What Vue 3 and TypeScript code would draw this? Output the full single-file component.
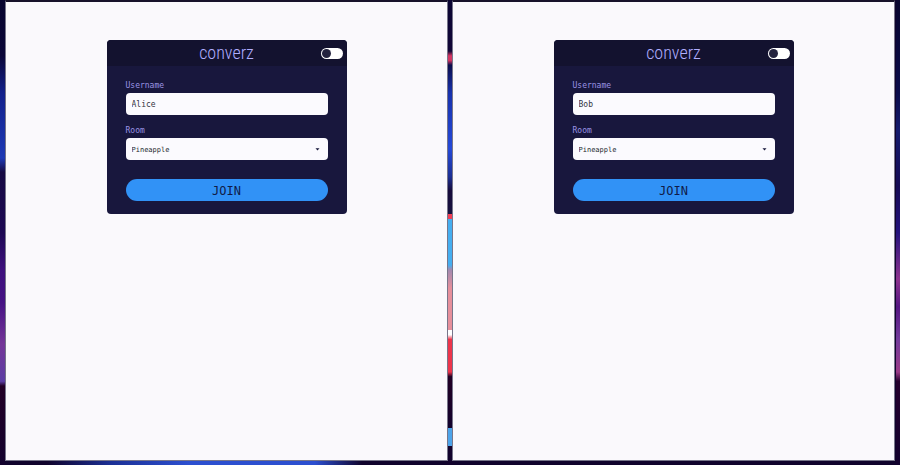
<script setup lang="ts">
import { reactive } from 'vue'

interface Client {
  id: string
  username: string
  room: string
  light: boolean
}

const rooms: string[] = ['Pineapple', 'Mango', 'Papaya']

const clients = reactive<Client[]>([
  { id: 'left', username: 'Alice', room: 'Pineapple', light: false },
  { id: 'right', username: 'Bob', room: 'Pineapple', light: false },
])
</script>

<template>
  <div class="desktop">
    <main v-for="client in clients" :key="client.id" class="window">
      <form class="card" @submit.prevent>
        <header class="card-header">
          <h1 class="brand">converz</h1>
          <input v-model="client.light" type="checkbox" class="toggle" aria-label="Theme" />
        </header>
        <div class="card-body">
          <div class="field">
            <label class="label" :for="`${client.id}-username`">Username</label>
            <input
              :id="`${client.id}-username`"
              v-model="client.username"
              class="control"
              type="text"
              autocomplete="off"
            />
          </div>
          <div class="field">
            <label class="label" :for="`${client.id}-room`">Room</label>
            <div class="select-wrap">
              <select :id="`${client.id}-room`" v-model="client.room" class="control select">
                <option v-for="room in rooms" :key="room" :value="room">{{ room }}</option>
              </select>
              <svg class="caret" viewBox="0 0 5 3" aria-hidden="true">
                <path d="M0.5 0.3h4L2.5 2.6z" fill="#17173a" />
              </svg>
            </div>
          </div>
          <button type="submit" class="join">JOIN</button>
        </div>
      </form>
    </main>
  </div>
</template>

<style>
body {
  margin: 0;
}
</style>

<style scoped>
.desktop {
  box-sizing: border-box;
  display: grid;
  grid-template-columns: 1fr 1fr;
  gap: 4px;
  min-height: 100vh;
  padding: 0 5px 4px;
  font-family: "DejaVu Sans Mono", "Liberation Mono", monospace;
  background-color: #10032c;
  background-image:
    linear-gradient(90deg, transparent 0, #1b2f94 20%, #2c4fd0 45%, #2c4fd0 85%, transparent 100%),
    linear-gradient(#08052f 0, #0a0638 12%, #12208b 20%, #1d39b5 34%, #160a43 37%, #1c0853 50%, #3d107d 58%, #451284 65%, #743698 74%, #5b3da4 82%, #220026 83%, #13022e 100%),
    linear-gradient(#0b0633 0, #110638 11%, #d23562 12%, #d23562 13%, #0b0d4d 14%, #1732ad 20%, #2449d8 32%, #1b2f94 38%, #160b3c 41%, #16133f 46%, #ef3e55 46%, #ef3e55 47%, #45aef0 47%, #45aef0 57%, #a28ab0 58%, #e68f9b 62%, #e68f9b 71%, #fff 71%, #fff 72%, #ed354b 73%, #ed354b 80%, #210024 81%, #12022d 92%, #4da4ea 92%, #4da4ea 96%, #12022d 96%),
    linear-gradient(#08042e 0, #0b0c4b 20%, #151b6e 28%, #160b55 40%, #24127d 50%, #8c328e 60%, #541582 66%, #733b9c 73%, #9a3a87 80%, #25002e 82%, #12012e 100%);
  background-position: 8% 100%, 0 0, 50% 0, 100% 0;
  background-size: 35% 4px, 5px 100%, 6px 100%, 4px 100%;
  background-repeat: no-repeat;
}

.window {
  display: flex;
  align-items: flex-start;
  justify-content: center;
  min-width: 0;
  padding-top: 38px;
  background: #faf9fc;
  border: 1px solid #77768a;
  border-top: 2px solid #17122a;
}

.card {
  width: 240px;
  overflow: hidden;
  background: #18173d;
  border-radius: 4px;
}

.card-header {
  display: grid;
  grid-template-columns: 1fr auto 1fr;
  align-items: center;
  height: 26px;
  padding: 0 4px;
  background: #13122f;
}

.brand {
  grid-column: 2;
  margin: 0;
  color: #b0aeff;
  font-family: "Roboto Condensed", Roboto, sans-serif;
  font-size: 18px;
  font-weight: 300;
  line-height: 26px;
}

.toggle {
  appearance: none;
  display: flex;
  align-items: center;
  justify-self: end;
  box-sizing: border-box;
  width: 22px;
  height: 11px;
  margin: 0;
  padding: 0 1px;
  background: #fff;
  border-radius: 6px;
  cursor: pointer;
}

.toggle::before {
  content: "";
  width: 9px;
  height: 9px;
  background: #24233f;
  border-radius: 50%;
}

.toggle:checked {
  justify-content: flex-end;
}

.card-body {
  display: flex;
  flex-direction: column;
  gap: 11px;
  padding: 15px 19px 13px;
}

.field {
  display: flex;
  flex-direction: column;
  gap: 2px;
}

.label {
  color: #9a94e4;
  font-size: 8px;
  line-height: 10px;
}

.control {
  box-sizing: border-box;
  width: 100%;
  height: 22px;
  margin: 0;
  padding: 0 6px;
  color: #35343f;
  font: inherit;
  font-size: 8px;
  background: #fbfafe;
  border: 0;
  border-radius: 4px;
}

.select-wrap {
  display: grid;
  align-items: center;
}

.select {
  grid-area: 1 / 1;
  appearance: none;
  padding-top: 2px;
  color: #201f2b;
  font-size: 7px;
}

.caret {
  grid-area: 1 / 1;
  justify-self: end;
  width: 5px;
  height: 3px;
  margin-right: 8px;
  pointer-events: none;
}

.join {
  height: 22px;
  margin-top: 8px;
  padding: 1px 0 0;
  color: #101b48;
  font: inherit;
  font-size: 12px;
  line-height: 22px;
  background: #3192f6;
  border: 0;
  border-radius: 11px;
  cursor: pointer;
}
</style>
